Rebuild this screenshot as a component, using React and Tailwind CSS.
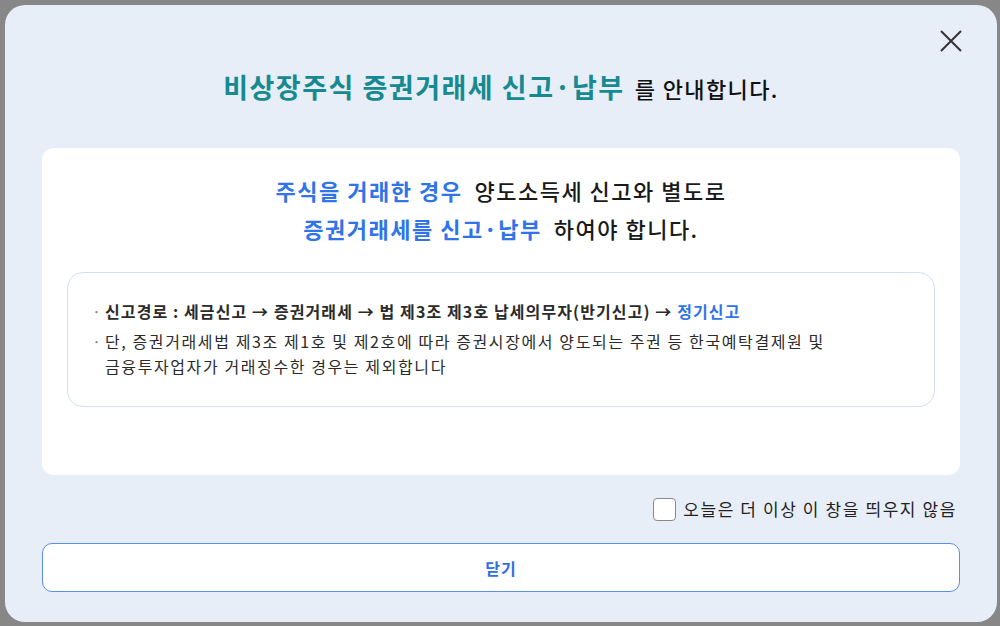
import { useState } from "react";

const Bullet = ({ children }) => (
  <li className="flex">
    <span className="w-[13px] shrink-0 text-[#888]">·</span>
    <span>{children}</span>
  </li>
);

const App = () => {
  const [hideToday, setHideToday] = useState(false);

  return (
    <div
      className="w-[1000px] h-[626px] bg-[#878787] pt-[5px] pl-[5px] overflow-hidden"
      style={{ fontFamily: '"Noto Sans CJK KR", "Noto Sans", sans-serif' }}
    >
      {/* modal */}
      <div className="relative w-[992px] h-[617px] rounded-[20px] bg-[#e7eef8] px-[37px] flex flex-col">
        <button className="absolute top-[22px] right-[32px] w-[28px] h-[28px] flex items-center justify-center text-[#333]">
          <svg width="24" height="24" viewBox="0 0 24 24" fill="none" stroke="currentColor" strokeWidth="2">
            <path d="M2 2 L22 22 M22 2 L2 22" />
          </svg>
        </button>

        <h2 className="pt-[62px] h-[143px] text-center leading-[40px]">
          <span className="text-[27px] font-bold text-[#178a91] tracking-[1.5px]">비상장주식 증권거래세 신고·납부</span>
          <span className="ml-[10px] text-[22px] font-medium text-[#111] tracking-[1.4px]">를 안내합니다.</span>
        </h2>

        <div className="h-[327px] bg-white rounded-[12px] px-[25px] pt-[23px]">
          <div className="text-center text-[22px] leading-[38px] font-medium text-[#1a1a1a] tracking-[1.5px]">
            <p>
              <span className="font-bold text-[#2f74e8]">주식을 거래한 경우</span>
              <span className="ml-[12px]">양도소득세 신고와 별도로</span>
            </p>
            <p>
              <span className="font-bold text-[#2f74e8]">증권거래세를 신고·납부</span>
              <span className="ml-[12px]">하여야 합니다.</span>
            </p>
          </div>

          <div className="mt-[25px] h-[135px] rounded-[16px] border border-[#d4e0f3] pl-[24px] pr-[18px] pt-[26px]">
            <ul className="text-[16px] leading-[25px] text-[#2b2b2b] flex flex-col gap-[5px]">
              <Bullet>
                <span className="font-bold tracking-[1.1px]">
                  신고경로 : 세금신고 → 증권거래세 → 법 제3조 제3호 납세의무자(반기신고) →{" "}
                  <span className="text-[#2f74e8]">정기신고</span>
                </span>
              </Bullet>
              <Bullet>
                <span className="tracking-[1.6px]">
                  단, 증권거래세법 제3조 제1호 및 제2호에 따라 증권시장에서 양도되는 주권 등 한국예탁결제원 및
                  <br />
                  금융투자업자가 거래징수한 경우는 제외합니다
                </span>
              </Bullet>
            </ul>
          </div>
        </div>

        <label className="h-[68px] flex items-center justify-end gap-[7px] pr-[3px] text-[17px] text-[#222] tracking-[1.6px] cursor-pointer">
          <input
            type="checkbox"
            checked={hideToday}
            onChange={(e) => setHideToday(e.target.checked)}
            className="appearance-none w-[23px] h-[23px] rounded-[4px] border border-[#8a8a8a] bg-white"
          />
          <span>오늘은 더 이상 이 창을 띄우지 않음</span>
        </label>

        <button className="h-[49px] w-full rounded-[10px] border-[1.5px] border-[#5b8eef] bg-white text-[16px] font-bold text-[#2f6fe0] tracking-[1px]">
          닫기
        </button>
      </div>
    </div>
  );
};

export default App;
